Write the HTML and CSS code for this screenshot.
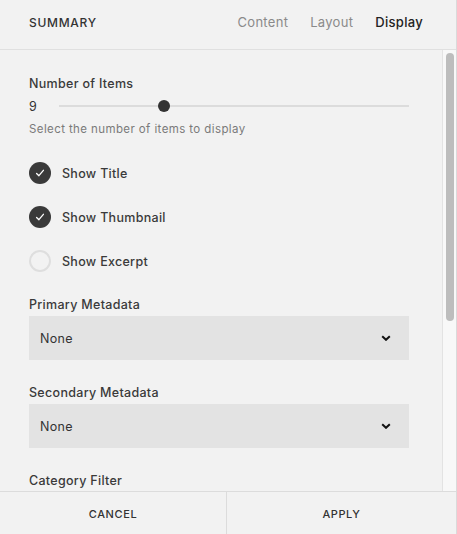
FILE: index.html
```html
<!DOCTYPE html>
<html lang="en">
<head>
<meta charset="utf-8">
<title>Summary</title>
<link rel="stylesheet" href="styles.css">
</head>
<body>
<div class="panel">
  <header class="header">
    <div class="title">SUMMARY</div>
    <nav class="tabs">
      <span class="tab">Content</span>
      <span class="tab">Layout</span>
      <span class="tab active">Display</span>
    </nav>
  </header>
  <div class="body">
    <main class="scroll">
      <div class="content">
        <div class="label">Number of Items</div>
        <div class="slider-row">
          <span class="slider-value">9</span>
          <div class="slider">
            <div class="slider-track"></div>
            <div class="slider-knob" style="left: 30%"></div>
          </div>
        </div>
        <div class="desc">Select the number of items to display</div>

        <div class="check first">
          <span class="box on"><svg viewBox="0 0 22 22" width="22" height="22"><path d="M7.6 11.5 L9.9 13.7 L14.4 8.3" fill="none" stroke="#fff" stroke-width="1.3" stroke-linecap="round" stroke-linejoin="round"/></svg></span>
          <span class="check-label">Show Title</span>
        </div>
        <div class="check">
          <span class="box on"><svg viewBox="0 0 22 22" width="22" height="22"><path d="M7.6 11.5 L9.9 13.7 L14.4 8.3" fill="none" stroke="#fff" stroke-width="1.3" stroke-linecap="round" stroke-linejoin="round"/></svg></span>
          <span class="check-label">Show Thumbnail</span>
        </div>
        <div class="check">
          <span class="box"></span>
          <span class="check-label">Show Excerpt</span>
        </div>

        <div class="label field-label">Primary Metadata</div>
        <div class="select"><span>None</span><svg class="chev" viewBox="0 0 10 6" width="10" height="6"><path d="M1.2 1.2 L5 4.8 L8.8 1.2" fill="none" stroke="#111" stroke-width="2"/></svg></div>

        <div class="label field-label">Secondary Metadata</div>
        <div class="select"><span>None</span><svg class="chev" viewBox="0 0 10 6" width="10" height="6"><path d="M1.2 1.2 L5 4.8 L8.8 1.2" fill="none" stroke="#111" stroke-width="2"/></svg></div>

        <div class="label field-label">Category Filter</div>
      </div>
    </main>
    <div class="scrollbar"><div class="thumb"></div></div>
  </div>
  <footer class="footer">
    <div class="btn">CANCEL</div>
    <div class="btn">APPLY</div>
  </footer>
</div>
</body>
</html>
```

FILE: styles.css
```css
html, body {
  margin: 0;
  padding: 0;
  background: #f2f2f2;
}

body {
  font-family: "Inter", "Liberation Sans", sans-serif;
  color: #333;
}

.panel {
  width: 456px;
  height: 534px;
  border-right: 1px solid #dadada;
  display: flex;
  flex-direction: column;
  background: #f2f2f2;
}

.header {
  height: 50px;
  box-sizing: border-box;
  flex: none;
  border-bottom: 1px solid #e0e0e0;
  display: flex;
  align-items: center;
  justify-content: space-between;
  padding: 0 33px 5px 29px;
}

.title {
  font-size: 12px;
  font-weight: 500;
  letter-spacing: 0.7px;
  color: #333;
}

.tabs {
  display: flex;
  gap: 22px;
}

.tab {
  font-size: 13px;
  color: #8a8a8a;
  letter-spacing: 0.3px;
}

.tab.active {
  color: #222;
  font-weight: 450;
}

.body {
  flex: 1;
  min-height: 0;
  display: flex;
}

.scroll {
  flex: 1;
  overflow: hidden;
}

.scrollbar {
  width: 14px;
  flex: none;
  background: #f8f8f8;
  border-left: 1px solid #e3e3e3;
  padding: 3px 3px 0 3px;
  box-sizing: border-box;
}

.thumb {
  height: 268px;
  width: 8px;
  border-radius: 4px;
  background: #bdbdbd;
}

.content {
  padding: 24px 33px 0 29px;
}

.label {
  font-size: 12.5px;
  line-height: 16px;
  padding-top: 2px;
  font-weight: 450;
  letter-spacing: 0.3px;
  color: #3a3a3a;
}

.slider-row {
  margin-top: 6px;
  height: 16px;
  display: flex;
  align-items: center;
}

.slider-value {
  font-size: 12.5px;
  width: 30px;
  color: #333;
}

.slider {
  position: relative;
  flex: 1;
  height: 16px;
}

.slider-track {
  position: absolute;
  left: 0;
  right: 0;
  top: 7px;
  height: 2px;
  background: #dcdcdc;
}

.slider-knob {
  position: absolute;
  top: 2px;
  width: 12px;
  height: 12px;
  margin-left: -6px;
  border-radius: 50%;
  background: #333;
}

.desc {
  margin-top: 7px;
  font-size: 11.5px;
  line-height: 16px;
  letter-spacing: 0.4px;
  color: #7a7a7a;
}

.check {
  margin-top: 22px;
  height: 22px;
  display: flex;
  align-items: center;
}

.check.first {
  margin-top: 25px;
}

.box {
  width: 22px;
  height: 22px;
  box-sizing: border-box;
  border-radius: 50%;
  border: 2px solid #dedede;
  flex: none;
  display: flex;
}

.box.on {
  background: #3a3a3a;
  border: none;
}

.check-label {
  margin-left: 11px;
  font-size: 12.5px;
  font-weight: 450;
  letter-spacing: 0.3px;
  color: #3a3a3a;
}

.field-label {
  margin-top: 23px;
}

.select {
  margin-top: 3px;
  height: 44px;
  background: #e3e3e3;
  display: flex;
  align-items: center;
  justify-content: space-between;
  padding: 0 18px 0 11px;
  font-size: 12.5px;
  letter-spacing: 0.3px;
  color: #333;
}

.chev {
  display: block;
}

.footer {
  height: 42px;
  flex: none;
  border-top: 1px solid #dcdcdc;
  display: grid;
  grid-template-columns: 226px 1fr;
}

.btn {
  display: flex;
  align-items: center;
  justify-content: center;
  padding-top: 2px;
  font-size: 11px;
  font-weight: 450;
  letter-spacing: 0.6px;
  color: #333;
}

.btn + .btn {
  border-left: 1px solid #dcdcdc;
}
```
